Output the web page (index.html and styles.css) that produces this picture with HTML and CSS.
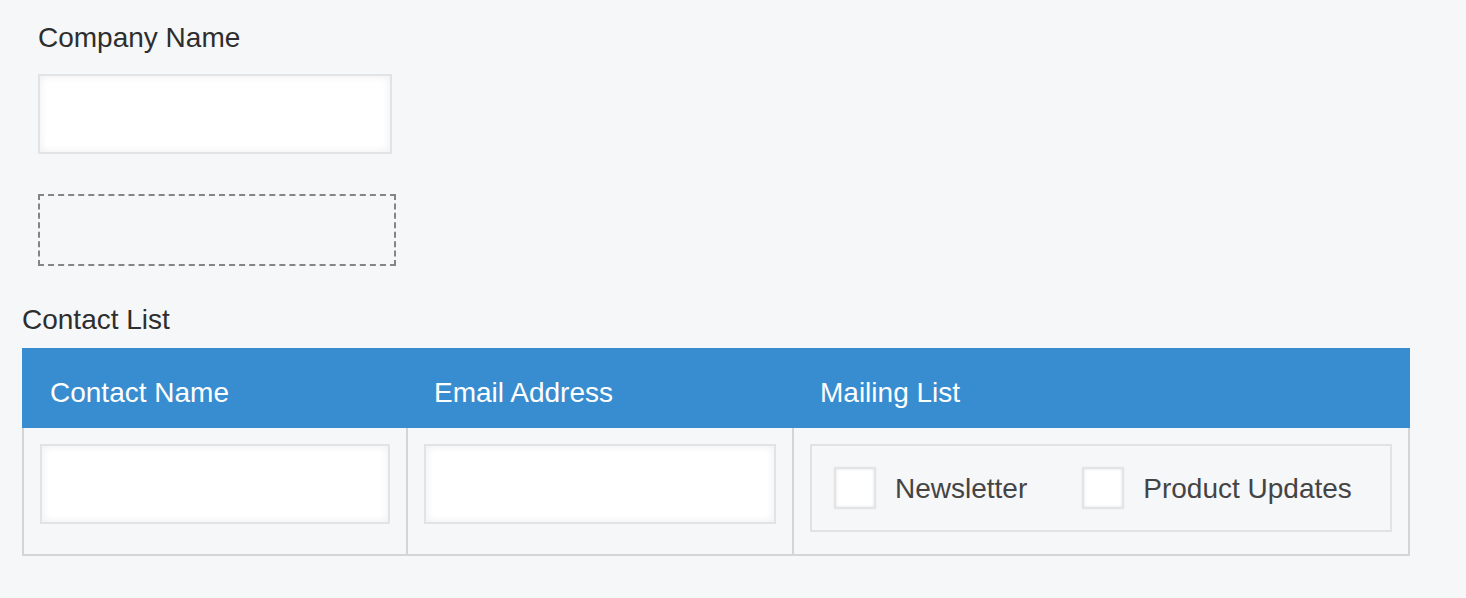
FILE: index.html
```html
<!DOCTYPE html>
<html lang="en">
<head>
<meta charset="utf-8">
<title>Company Form</title>
<link rel="stylesheet" href="styles.css">
</head>
<body>
<main class="page">
  <section class="field">
    <label class="field-label" for="company">Company Name</label>
    <input class="text-input company-input" id="company" type="text">
    <div class="drop-zone"></div>
  </section>

  <h2 class="section-label">Contact List</h2>
  <div class="grid-table">
    <div class="grid-head">
      <div class="head-cell">Contact Name</div>
      <div class="head-cell">Email Address</div>
      <div class="head-cell">Mailing List</div>
    </div>
    <div class="grid-row">
      <div class="body-cell"><input class="text-input cell-input" type="text"></div>
      <div class="body-cell"><input class="text-input cell-input" type="email"></div>
      <div class="body-cell body-cell-last">
        <div class="check-group">
          <label class="check-item"><span class="check-box"></span><span class="check-text">Newsletter</span></label>
          <label class="check-item"><span class="check-box"></span><span class="check-text">Product Updates</span></label>
        </div>
      </div>
    </div>
  </div>
</main>
</body>
</html>
```

FILE: styles.css
```css
* {
  box-sizing: border-box;
}

html, body {
  margin: 0;
  padding: 0;
  background: #f6f7f9;
}

body {
  font-family: "Liberation Sans", Arial, Helvetica, sans-serif;
  font-size: 28px;
  line-height: 32px;
  color: #333333;
}

.page {
  padding: 22px 22px 0 22px;
}

.field {
  padding-left: 16px;
  display: flex;
  flex-direction: column;
  align-items: flex-start;
}

.field-label {
  display: block;
  height: 32px;
  color: #2e2e2e;
}

.text-input {
  display: block;
  height: 80px;
  margin: 0;
  padding: 0 16px;
  background: #ffffff;
  border: 2px solid #e1e3e4;
  border-radius: 0;
  box-shadow: inset 0 0 10px rgba(0, 0, 0, 0.07);
  font: inherit;
  outline: none;
}

.company-input {
  width: 354px;
  margin-top: 20px;
}

.drop-zone {
  width: 358px;
  height: 72px;
  margin-top: 40px;
  border: 2px dashed #858585;
}

.section-label {
  margin: 38px 0 12px 0;
  font-size: 28px;
  line-height: 32px;
  font-weight: normal;
  color: #2e2e2e;
}

.grid-table {
  width: 1388px;
}

.grid-head,
.grid-row {
  display: grid;
  grid-template-columns: 384px 386px 618px;
}

.grid-head {
  background: #388dd0;
  height: 80px;
}

.head-cell {
  padding: 29px 28px 19px 28px;
  color: #ffffff;
}

.grid-row {
  border-bottom: 2px solid #d4d5d7;
}

.body-cell {
  border-left: 2px solid #d4d5d7;
  padding: 16px 16px 22px 16px;
}

.body-cell-last {
  border-right: 2px solid #d4d5d7;
}

.cell-input {
  width: 100%;
}

.check-group {
  height: 88px;
  border: 2px solid #e1e2e4;
  display: flex;
  align-items: center;
  padding-left: 22px;
  gap: 55px;
}

.check-item {
  display: flex;
  align-items: center;
  gap: 19px;
  color: #444444;
}

.check-box {
  display: block;
  width: 42px;
  height: 42px;
  background: #ffffff;
  border: 2px solid #e3e4e5;
  box-shadow: inset 0 0 3px rgba(0, 0, 0, 0.12), 0 0 2px rgba(0, 0, 0, 0.06);
}

.check-text {
  display: block;
  padding-top: 2px;
}
```
